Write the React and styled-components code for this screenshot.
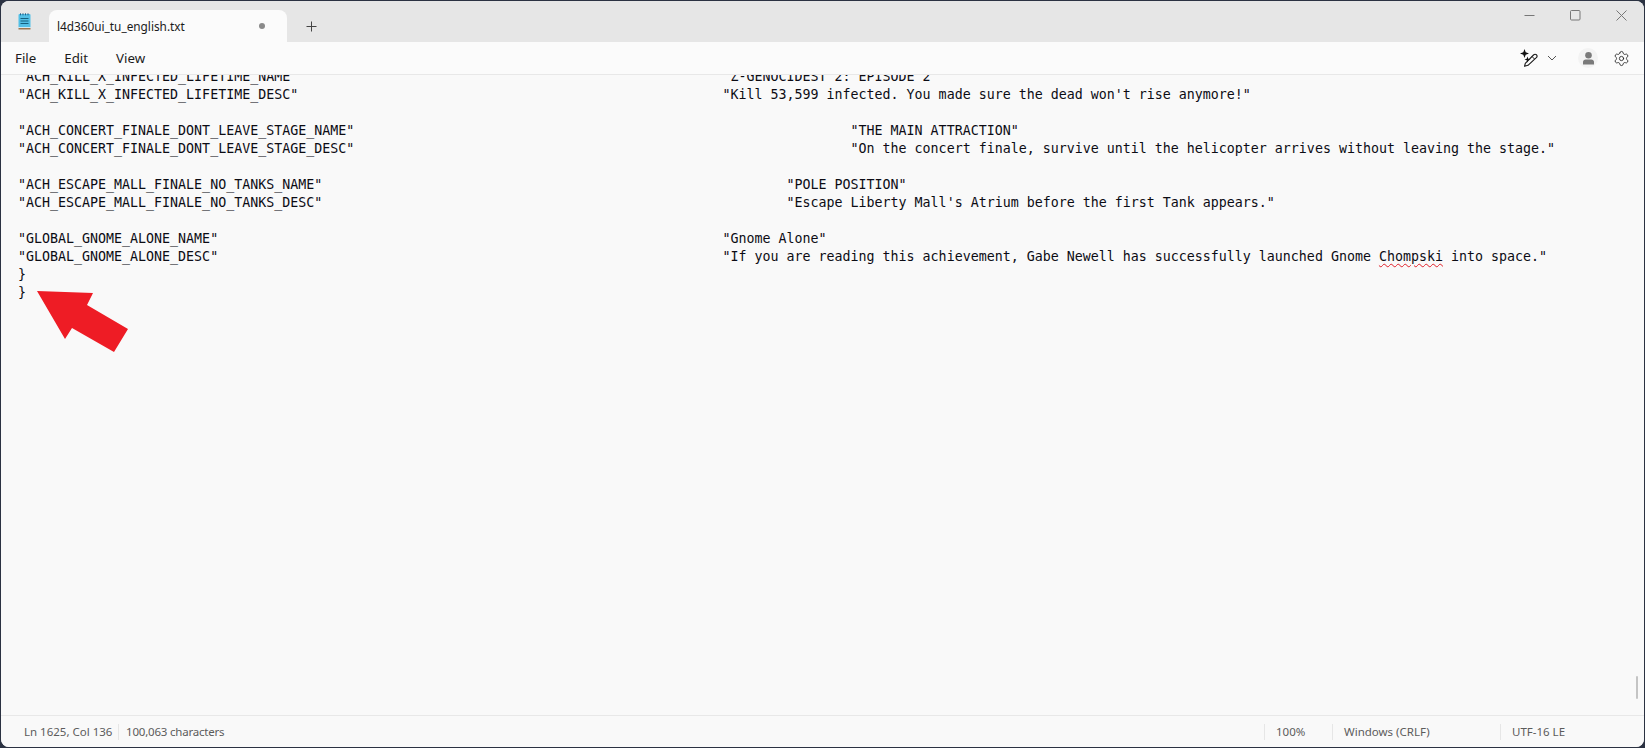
import React from "react";
import styled, { createGlobalStyle } from "styled-components";
import { Settings } from "lucide-react";

const GlobalStyle = createGlobalStyle`
  html, body {
    margin: 0;
    height: 100%;
    background: #2b3242;
    overflow: hidden;
  }
  #root {
    height: 100%;
  }
`;

const UI_FONT = `"Noto Sans", "Open Sans", sans-serif`;

const Frame = styled.div`
  height: 748px;
  box-sizing: border-box;
  padding: 1px;
  position: relative;
  font-family: ${UI_FONT};
`;

const Window = styled.div`
  height: 100%;
  display: flex;
  flex-direction: column;
  border-radius: 8px;
  overflow: hidden;
  background: #f9f9f9;
`;

const TitleBar = styled.div`
  height: 41px;
  flex: none;
  display: flex;
  align-items: flex-end;
  background: #e6e6e6;
`;

const AppIcon = styled.div`
  width: 48px;
  height: 41px;
  flex: none;
  display: flex;
  align-items: center;
  justify-content: center;
  padding-right: 1px;
  box-sizing: border-box;
`;

const Tab = styled.div`
  width: 238px;
  height: 32px;
  flex: none;
  box-sizing: border-box;
  display: flex;
  align-items: center;
  justify-content: space-between;
  padding: 0 22px 0 8px;
  background: #fbfbfb;
  border-radius: 8px 8px 0 0;
  font-size: 11.8px;
  color: #1a1a1a;
`;

const Dot = styled.span`
  width: 6px;
  height: 6px;
  border-radius: 50%;
  background: #8a8a8a;
`;

const NewTab = styled.div`
  width: 46px;
  height: 32px;
  margin-left: 1px;
  flex: none;
  display: flex;
  align-items: center;
  justify-content: center;
`;

const WindowControls = styled.div`
  margin-left: auto;
  height: 100%;
  display: flex;
  align-items: flex-start;
  padding-top: 8px;
  box-sizing: border-box;
`;

const WindowButton = styled.div`
  width: 46px;
  height: 12px;
  display: flex;
  align-items: center;
  justify-content: center;
`;

const MenuBar = styled.div`
  height: 33px;
  flex: none;
  display: flex;
  align-items: center;
  background: #fbfbfb;
  border-bottom: 1px solid #e8e8e8;
  box-sizing: border-box;
  padding-left: 14px;
`;

const MenuItem = styled.span`
  font-size: 13.3px;
  color: #1c1c1c;
  margin-right: 28px;
`;

const Tools = styled.div`
  margin-left: auto;
  display: flex;
  align-items: center;
  height: 100%;
`;

const Chevron = styled.div`
  width: 10px;
  margin: 0 21px 0 9px;
  display: flex;
`;

const Avatar = styled.div`
  width: 20px;
  height: 20px;
  border-radius: 50%;
  background: #f3f3f3;
  display: flex;
  align-items: center;
  justify-content: center;
  margin-right: 15px;
`;

const GearSlot = styled.div`
  display: flex;
  margin-right: 14px;
`;

const Editor = styled.div`
  flex: 1;
  min-height: 0;
  overflow: hidden;
  position: relative;
  background: #f9f9f9;
`;

const TextLines = styled.div`
  margin-top: -7px;
  padding-left: 17px;
  font-family: "DejaVu Sans Mono", monospace;
  font-size: 13.3px;
  line-height: 18px;
  color: #0c0c14;
`;

const Line = styled.div`
  height: 18px;
  white-space: pre;
`;

const Misspelt = styled.span`
  text-decoration: underline wavy #e0202a 1px;
  text-underline-offset: 2px;
`;

const ScrollThumb = styled.div`
  position: absolute;
  top: 601px;
  right: 6px;
  width: 2px;
  height: 23px;
  border-radius: 1px;
  background: #c4c4c4;
`;

const StatusBar = styled.div`
  height: 32px;
  flex: none;
  display: flex;
  align-items: center;
  border-top: 1px solid #e8e8e8;
  background: #f9f9f9;
  box-sizing: border-box;
  font-size: 11.5px;
  color: #5c5c5c;
`;

const StatusCell = styled.div`
  flex: none;
  box-sizing: border-box;
  height: 16px;
  line-height: 16px;
  white-space: nowrap;
  width: ${(p) => p.$width}px;
  padding-left: ${(p) => p.$pad}px;
  letter-spacing: ${(p) => p.$spacing || 0}px;
  border-left: ${(p) => (p.$first ? "none" : "1px solid #e6e6e6")};
`;

const StatusSpacer = styled.div`
  flex: 1;
`;

const Arrow = styled.svg`
  position: absolute;
  left: 0;
  top: 0;
  pointer-events: none;
`;

const keyLine = (key, value, column) => key.padEnd(column, " ") + value;

const lines = [
  keyLine(`"ACH_KILL_X_INFECTED_LIFETIME_NAME"`, `"Z-GENOCIDEST 2: EPISODE 2"`, 88),
  keyLine(`"ACH_KILL_X_INFECTED_LIFETIME_DESC"`, `"Kill 53,599 infected. You made sure the dead won't rise anymore!"`, 88),
  "",
  keyLine(`"ACH_CONCERT_FINALE_DONT_LEAVE_STAGE_NAME"`, `"THE MAIN ATTRACTION"`, 104),
  keyLine(`"ACH_CONCERT_FINALE_DONT_LEAVE_STAGE_DESC"`, `"On the concert finale, survive until the helicopter arrives without leaving the stage."`, 104),
  "",
  keyLine(`"ACH_ESCAPE_MALL_FINALE_NO_TANKS_NAME"`, `"POLE POSITION"`, 96),
  keyLine(`"ACH_ESCAPE_MALL_FINALE_NO_TANKS_DESC"`, `"Escape Liberty Mall's Atrium before the first Tank appears."`, 96),
  "",
  keyLine(`"GLOBAL_GNOME_ALONE_NAME"`, `"Gnome Alone"`, 88),
];

function NotepadIcon() {
  return (
    <svg width="13" height="17" viewBox="0 0 13 17">
      <rect x="0.5" y="1" width="12" height="14" rx="1" fill="#52bfe6" />
      <rect x="0.5" y="14.2" width="12" height="1" fill="#eef6fa" />
      <rect x="0.5" y="15.2" width="12" height="1.2" fill="#8a5a2b" />
      <path d="M2.5 0.3v2M5 0.3v2M7.5 0.3v2M10 0.3v2" stroke="#1f5f88" strokeWidth="1" />
      <path d="M2.5 5.5h8M2.5 8h8M2.5 10.5h8" stroke="#14607f" strokeWidth="1" />
    </svg>
  );
}

function CopilotPen() {
  return (
    <svg width="18" height="18" viewBox="0 0 18 18" fill="none">
      <path d="M4.5 0l1.2 3.3 3.3 1.2-3.3 1.2-1.2 3.3-1.2-3.3L0 4.5l3.3-1.2z" fill="#111" />
      <path d="M7.5 7.5l.8 2.2 2.2.8-2.2.8-.8 2.2-.8-2.2-2.2-.8 2.2-.8z" fill="#111" />
      <path d="M4.5 17.3l.8-3 8.2-8.3c1-1 2-1 3-.2.8.9.7 2-.2 2.9L8 16.3z" stroke="#1a1a1a" strokeWidth="1.1" strokeLinejoin="round" />
      <path d="M12 7.5l2.5 2.5" stroke="#1a1a1a" strokeWidth="1" />
    </svg>
  );
}

export default function App() {
  return (
    <Frame>
      <GlobalStyle />
      <Window>
        <TitleBar>
          <AppIcon>
            <NotepadIcon />
          </AppIcon>
          <Tab>
            <span>l4d360ui_tu_english.txt</span>
            <Dot />
          </Tab>
          <NewTab>
            <svg width="11" height="11" viewBox="0 0 11 11">
              <path d="M5.5 0.5v10M0.5 5.5h10" stroke="#444" strokeWidth="1" />
            </svg>
          </NewTab>
          <WindowControls>
            <WindowButton>
              <svg width="11" height="11" viewBox="0 0 11 11">
                <path d="M0.5 5.5h10" stroke="#777" strokeWidth="1" />
              </svg>
            </WindowButton>
            <WindowButton>
              <svg width="11" height="11" viewBox="0 0 11 11">
                <rect x="0.5" y="0.5" width="9.5" height="9.5" rx="1" fill="none" stroke="#777" strokeWidth="1" />
              </svg>
            </WindowButton>
            <WindowButton>
              <svg width="11" height="11" viewBox="0 0 11 11">
                <path d="M0.5 0.5l10 10M10.5 0.5l-10 10" stroke="#777" strokeWidth="1" />
              </svg>
            </WindowButton>
          </WindowControls>
        </TitleBar>
        <MenuBar>
          <MenuItem>File</MenuItem>
          <MenuItem>Edit</MenuItem>
          <MenuItem>View</MenuItem>
          <Tools>
            <CopilotPen />
            <Chevron>
              <svg width="10" height="6" viewBox="0 0 10 6">
                <path d="M1 1l4 4 4-4" fill="none" stroke="#555" strokeWidth="1" />
              </svg>
            </Chevron>
            <Avatar>
              <svg width="11" height="13" viewBox="0 0 11 13">
                <circle cx="5.5" cy="3.3" r="3.3" fill="#7a7a7a" />
                <path d="M0 12.5V10C0 8.5 1.2 7.5 2.7 7.5h5.6C9.8 7.5 11 8.5 11 10v2.5z" fill="#7a7a7a" />
              </svg>
            </Avatar>
            <GearSlot>
              <Settings size={17} color="#222" strokeWidth={1.2} />
            </GearSlot>
          </Tools>
        </MenuBar>
        <Editor>
          <TextLines>
            {lines.map((text, i) => (
              <Line key={i}>{text}</Line>
            ))}
            <Line>
              {keyLine(`"GLOBAL_GNOME_ALONE_DESC"`, `"If you are reading this achievement, Gabe Newell has successfully launched Gnome `, 88)}
              <Misspelt>Chompski</Misspelt>
              {` into space."`}
            </Line>
            <Line>{"}"}</Line>
            <Line>{"}"}</Line>
          </TextLines>
          <ScrollThumb />
        </Editor>
        <StatusBar>
          <StatusCell $first $width={117} $pad={23}>Ln 1625, Col 136</StatusCell>
          <StatusCell $width={150} $pad={7} $spacing={-0.2}>100,063 characters</StatusCell>
          <StatusSpacer />
          <StatusCell $width={68} $pad={11}>100%</StatusCell>
          <StatusCell $width={168} $pad={11}>Windows (CRLF)</StatusCell>
          <StatusCell $width={144} $pad={11}>UTF-16 LE</StatusCell>
        </StatusBar>
      </Window>
      <Arrow width="140" height="360" viewBox="0 0 140 360">
        <polygon points="37,291 93,293 87,305 128,329 114,352 72,328 65,339" fill="#ee1c25" />
      </Arrow>
    </Frame>
  );
}
